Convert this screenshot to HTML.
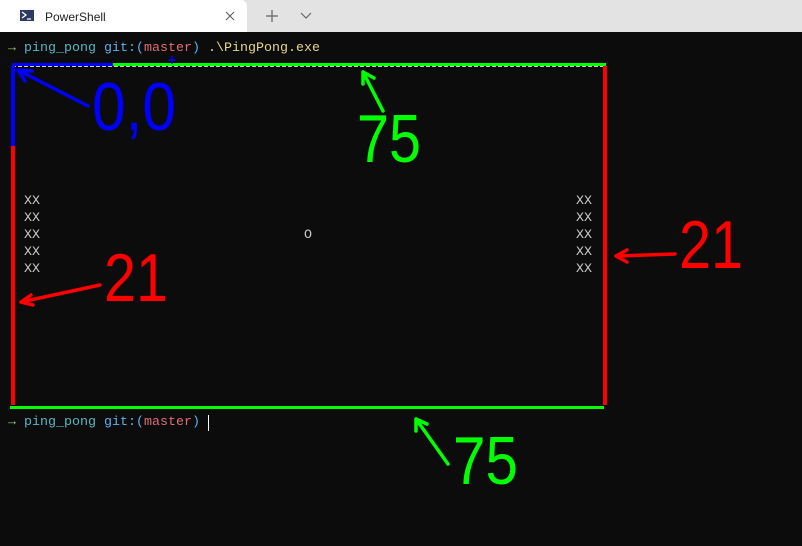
<!DOCTYPE html>
<html><head><meta charset="utf-8"><style>
html,body{margin:0;padding:0;width:802px;height:546px;overflow:hidden;background:#0c0c0c}
#bar{position:absolute;left:0;top:0;width:802px;height:32px;background:#e3e3e3}
#tab{position:absolute;left:0;top:0;width:247px;height:32px;background:#fff;border-radius:0 6px 0 0}
.t{position:absolute;font-family:"Liberation Mono",monospace;font-size:13.33px;line-height:17px;white-space:pre;color:#cccccc}
</style></head><body>
<div id="bar"><div id="tab"></div></div>
<svg style="position:absolute;left:0;top:0" width="802" height="32">
  <rect x="20" y="10" width="14" height="11" fill="#2b3a67" transform="skew(-10)"/>
  <path d="M22 12 l4 3 -4 3" stroke="#fff" stroke-width="1.3" fill="none"/>
  <line x1="27" y1="19" x2="31" y2="19" stroke="#fff" stroke-width="1.2"/>
  <text x="45" y="21" font-family="Liberation Sans,sans-serif" font-size="12" fill="#222">PowerShell</text>
  <path d="M226 12 l8 8 M234 12 l-8 8" stroke="#555" stroke-width="1"/>
  <path d="M272 10 v12 M266 16 h12" stroke="#666" stroke-width="1.3"/>
  <path d="M301 13 l5 5 5 -5" stroke="#666" stroke-width="1.2" fill="none"/>
</svg>
<div class="t" style="left:8px;top:40px"><span style="color:#98c379">→</span> <span style="color:#56b6c2">ping_pong</span> <span style="color:#61afef">git:(</span><span style="color:#e06c75">master</span><span style="color:#61afef">)</span> <span style="color:#e5d58a">.\PingPong.exe</span></div>
<div class="t" style="left:8px;top:414px"><span style="color:#98c379">→</span> <span style="color:#56b6c2">ping_pong</span> <span style="color:#61afef">git:(</span><span style="color:#e06c75">master</span><span style="color:#61afef">)</span> </div>
<div style="position:absolute;left:208px;top:415px;width:1px;height:16px;background:#fff"></div>
<div class="t" style="left:24px;top:193px">XX
XX
XX
XX
XX</div>
<div class="t" style="left:576px;top:193px">XX
XX
XX
XX
XX</div>
<div class="t" style="left:304px;top:227px">O</div>
<svg style="position:absolute;left:0;top:0" width="802" height="546">
  <line x1="12" y1="66.5" x2="606" y2="66.5" stroke="#ccc" stroke-width="1" stroke-dasharray="4 2"/>
  <rect x="113" y="63" width="493" height="3" fill="#00ff00"/>
  <rect x="12" y="63" width="101" height="3" fill="#0000ff"/>
  <path d="M172 56 v8 M168 60 h8" stroke="#0000ff" stroke-width="1.5"/>
  <rect x="11" y="66" width="4" height="80" fill="#0000ff"/>
  <rect x="11" y="146" width="4" height="259" fill="#ff0000"/>
  <rect x="603" y="66" width="4" height="339" fill="#ff0000"/>
  <rect x="10" y="406" width="594" height="3" fill="#00ff00"/>
  <g fill="none" stroke-width="3.5" stroke-linecap="round">
    <path d="M88 106 L18 70 M18 70 l14 1 M18 70 l7 11" stroke="#0000ff"/>
    <path d="M383 111 L363 72 M363 72 l11 6 M363 72 l0 12" stroke="#00ff00"/>
    <path d="M675 254 L616 256 M616 256 l11 -6 M616 256 l11 6" stroke="#ff0000"/>
    <path d="M100 285 L21 302 M21 302 l10 -7 M21 302 l12 3" stroke="#ff0000"/>
    <path d="M448 464 L416 419 M416 419 l11 5 M416 419 l0 12" stroke="#00ff00"/>
  </g>
  <g font-family="Liberation Sans,sans-serif" font-size="68" lengthAdjust="spacingAndGlyphs">
    <text x="92" y="130" fill="#0000ff" textLength="84" lengthAdjust="spacingAndGlyphs">0,0</text>
    <text x="357" y="162" fill="#00ff00" textLength="64" lengthAdjust="spacingAndGlyphs">75</text>
    <text x="679" y="268" fill="#ff0000" textLength="64" lengthAdjust="spacingAndGlyphs">21</text>
    <text x="104" y="301" fill="#ff0000" textLength="64" lengthAdjust="spacingAndGlyphs">21</text>
    <text x="453" y="484" fill="#00ff00" textLength="65" lengthAdjust="spacingAndGlyphs">75</text>
  </g>
</svg>
</body></html>
